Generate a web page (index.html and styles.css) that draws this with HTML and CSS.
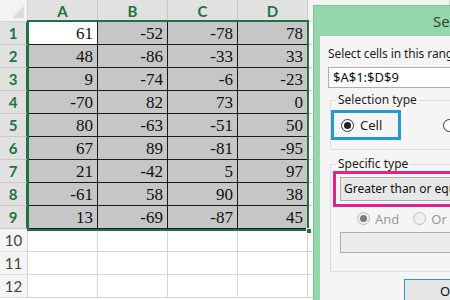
FILE: index.html
```html
<!DOCTYPE html>
<html>
<head>
<meta charset="utf-8">
<link rel="stylesheet" href="styles.css">
</head>
<body>
<div class="sheet">
  <div class="grid">
    <div class="corner"><span class="tri"></span></div>
    <div class="ch sel">A</div><div class="ch sel">B</div><div class="ch sel">C</div><div class="ch sel">D</div><div class="ch"></div>

    <div class="rh sel">1</div><div class="c active">61</div><div class="c">-52</div><div class="c">-78</div><div class="c">78</div><div class="e"></div>
    <div class="rh sel">2</div><div class="c">48</div><div class="c">-86</div><div class="c">-33</div><div class="c">33</div><div class="e"></div>
    <div class="rh sel">3</div><div class="c">9</div><div class="c">-74</div><div class="c">-6</div><div class="c">-23</div><div class="e"></div>
    <div class="rh sel">4</div><div class="c">-70</div><div class="c">82</div><div class="c">73</div><div class="c">0</div><div class="e"></div>
    <div class="rh sel">5</div><div class="c">80</div><div class="c">-63</div><div class="c">-51</div><div class="c">50</div><div class="e"></div>
    <div class="rh sel">6</div><div class="c">67</div><div class="c">89</div><div class="c">-81</div><div class="c">-95</div><div class="e"></div>
    <div class="rh sel">7</div><div class="c">21</div><div class="c">-42</div><div class="c">5</div><div class="c">97</div><div class="e"></div>
    <div class="rh sel">8</div><div class="c">-61</div><div class="c">58</div><div class="c">90</div><div class="c">38</div><div class="e"></div>
    <div class="rh sel">9</div><div class="c">13</div><div class="c">-69</div><div class="c">-87</div><div class="c">45</div><div class="e"></div>
    <div class="rh">10</div><div class="e"></div><div class="e"></div><div class="e"></div><div class="e"></div><div class="e"></div>
    <div class="rh">11</div><div class="e"></div><div class="e"></div><div class="e"></div><div class="e"></div><div class="e"></div>
    <div class="rh">12</div><div class="e"></div><div class="e"></div><div class="e"></div><div class="e"></div><div class="e"></div>
  </div>
  <div class="selbox"><span class="handle"></span></div>
</div>

<div class="dialog">
  <div class="titlebar">Select Specific Cells</div>
  <div class="body">
    <div class="label">Select cells in this range:</div>
    <div class="input">$A$1:$D$9</div>
    <fieldset class="group g1">
      <legend>Selection type</legend>
      <div class="radios">
        <div class="hl-blue"><span class="radio on"></span><span>Cell</span></div>
        <div class="opt2"><span class="radio"></span><span>Entire row</span></div>
      </div>
    </fieldset>
    <fieldset class="group g2">
      <legend>Specific type</legend>
      <div class="hl-pink"><div class="combo">Greater than or equal to</div></div>
      <div class="andor">
        <span class="radio dis on"></span><span class="dtext">And</span>
        <span class="radio dis"></span><span class="dtext">Or</span>
      </div>
      <div class="input dis-input"></div>
    </fieldset>
    <div class="btnrow"><div class="btn">Ok</div></div>
  </div>
</div>
</body>
</html>
```

FILE: styles.css
```css
* { box-sizing: border-box; }
html, body { margin: 0; padding: 0; }
body {
  width: 450px; height: 300px; overflow: hidden; background: #ffffff;
  position: relative;
}
.sheet { position: relative; }
.grid {
  display: grid;
  grid-template-columns: 28px 70px 70px 70px 70px 1fr;
  grid-template-rows: 22px repeat(12, 23px);
}
.corner {
  background: #f3f3f3;
  border-right: 1px solid #d4d4d4;
  border-bottom: 1px solid #d4d4d4;
  position: relative;
}
.tri {
  position: absolute; right: 3px; bottom: 3px;
  width: 0; height: 0;
  border-left: 12px solid transparent;
  border-bottom: 12px solid #dcdcdc;
}
.ch {
  background: #f3f3f3;
  border-right: 1px solid #d4d4d4;
  border-bottom: 1px solid #d4d4d4;
  font: 700 15px "Lato", "Liberation Sans", sans-serif;
  color: #217346;
  display: flex; align-items: center; justify-content: center;
  padding-top: 1px;
}
.ch.sel { background: #e1e1e1; border-bottom: 2px solid #217346; border-right-color: #c8c8c8; }
.rh {
  background: #f5f5f5;
  border-right: 1px solid #d4d4d4;
  border-bottom: 1px solid #e0e0e0;
  font: 400 15px "Lato", "Liberation Sans", sans-serif;
  color: #444;
  display: flex; align-items: center; justify-content: center;
}
.rh.sel { background: #e1e1e1; color: #217346; font-weight: 700; border-right: 2px solid #217346; border-bottom-color: #c8c8c8; }
.c {
  background: #c6c6c6;
  border-right: 1px solid #1a1a1a;
  border-bottom: 1px solid #1a1a1a;
  font: 17px "Liberation Serif", serif;
  color: #111;
  text-align: right;
  padding-right: 4px;
  line-height: 23px;
}
.c.active { background: #ffffff; }
.e {
  border-right: 1px solid #d4d4d4;
  border-bottom: 1px solid #d4d4d4;
}
.selbox {
  position: absolute; left: 27px; top: 20px; width: 282px; height: 211px;
  border: 2px solid #217346;
}
.handle {
  position: absolute; right: -5px; bottom: -5px; width: 6px; height: 6px;
  background: #217346; border: 1px solid #fff;
}

/* dialog */
.dialog {
  position: absolute; left: 313px; top: 5px; width: 160px; height: 310px;
  background: #93d7aa;
  border: 1px solid #7dc495;
  padding: 0 0 0 6px;
  display: flex; flex-direction: column;
  font-family: "Noto Sans", "Open Sans", sans-serif;
}
.titlebar {
  height: 30px; flex: none;
  font: 15px "Noto Sans", sans-serif; color: #3d3d3d;
  padding-left: 113px; line-height: 31px;
  white-space: nowrap; overflow: hidden;
}
.body {
  flex: 1; background: #f5f5f5; padding: 9px 0 0 8px;
  white-space: nowrap;
  font-size: 12px; color: #1e1e1e;
}
.label { height: 17px; line-height: 17px; letter-spacing: -0.1px; }
.input {
  margin-top: 5px; height: 21px; width: 200px;
  background: #fff; border: 1px solid #adadad;
  padding-left: 4px; line-height: 19px; font-size: 13px; color: #111;
}
.group {
  margin: 5px 0 0 2px; padding: 0; width: 200px;
  border: 1px solid #dcdcdc; border-right: none;
}
.group legend {
  padding: 0 2px; margin-left: 5px; font-size: 12px; color: #1e1e1e; line-height: 14px;
}
.radios { display: flex; align-items: center; gap: 42px; margin: 3px 0 9px 0; }
.hl-blue {
  width: 70px; height: 30px; border: 3px solid #2499d6;
  display: flex; align-items: center; gap: 6px; padding-left: 7px;
  font-size: 13px;
}
.opt2 { display: flex; align-items: center; gap: 6px; font-size: 13px; }
.radio {
  width: 13px; height: 13px; border-radius: 50%;
  border: 1px solid #333; background: #fff;
  display: inline-flex; align-items: center; justify-content: center; flex: none;
}
.radio.on::after { content: ""; width: 7px; height: 7px; border-radius: 50%; background: #222; }
.g2 { margin-top: 7px; padding-bottom: 18px; }
.hl-pink {
  margin: 0 0 0 2px; height: 36px; border: 3px solid #e0228c;
  padding: 3px 0 0 4px;
}
.combo {
  height: 24px; background: #e8e8e8; border: 1px solid #acacac;
  padding-left: 3px; line-height: 22px; font-size: 12px; color: #111;
}
.andor { display: flex; align-items: center; margin: 4px 0 0 26px; height: 15px; }
.radio.dis { border-color: #bcbcbc; background: #f0f0f0; }
.radio.dis.on::after { background: #7a7a7a; }
.dtext { color: #9a9a9a; font-size: 13px; margin: 0 14px 0 5px; }
.dis-input { margin: 6px 0 0 9px; background: #ebebeb; width: 200px; height: 21px; }
.btnrow { padding: 7px 0 0 76px; }
.btn {
  width: 90px; height: 24px; border: 1px solid #2499d6; background: #e6e6e6;
  line-height: 22px; font-size: 13px; padding-left: 35px; color: #111;
}
```
